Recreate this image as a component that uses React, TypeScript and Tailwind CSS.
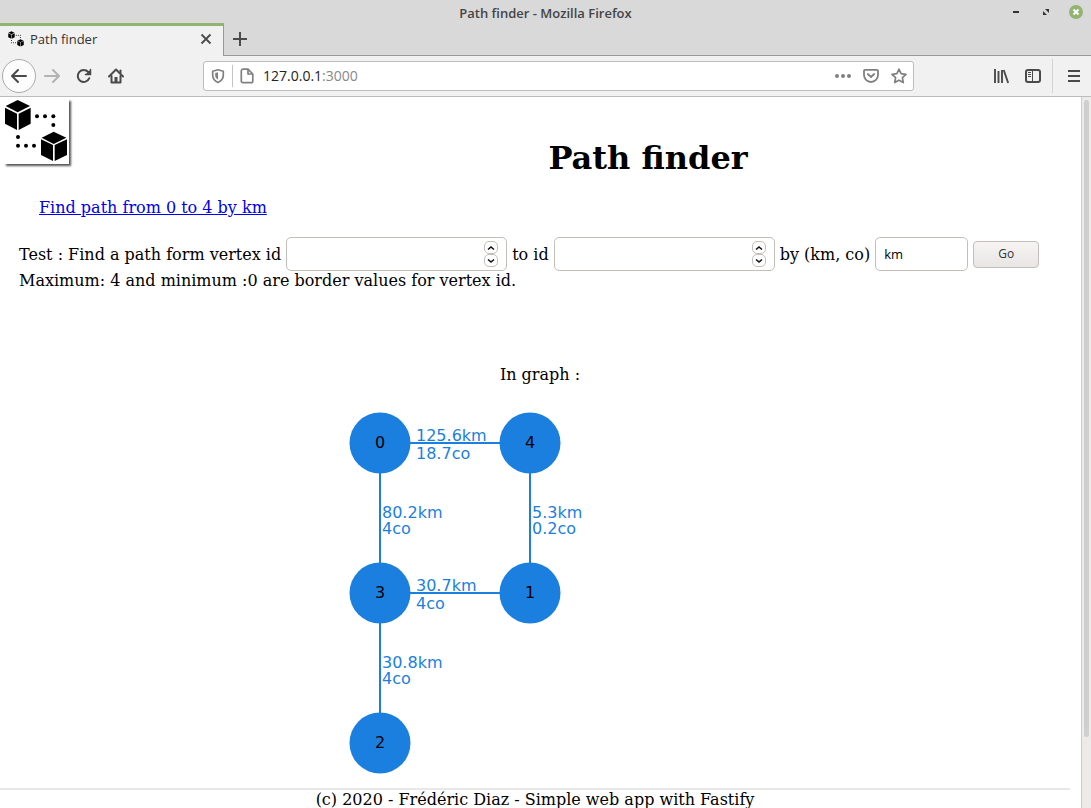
import { useState } from "react";

type Vertex = { id: number; x: number; y: number };
type Edge = { from: number; to: number; km: string; co: string };

const vertices: Vertex[] = [
  { id: 0, x: 40, y: 40 },
  { id: 4, x: 190, y: 40 },
  { id: 3, x: 40, y: 190 },
  { id: 1, x: 190, y: 190 },
  { id: 2, x: 40, y: 340 },
];

const edges: Edge[] = [
  { from: 0, to: 4, km: "125.6km", co: "18.7co" },
  { from: 0, to: 3, km: "80.2km", co: "4co" },
  { from: 4, to: 1, km: "5.3km", co: "0.2co" },
  { from: 3, to: 1, km: "30.7km", co: "4co" },
  { from: 3, to: 2, km: "30.8km", co: "4co" },
];

function CubesLogo({ className }: { className: string }) {
  return (
    <svg className={className} viewBox="12 27 192 192" aria-hidden="true">
      <g fill="#000">
        <path d="M53 30 90 48 53 67 17 48Z" />
        <path d="M15 53 51 71V120L15 101Z" />
        <path d="M92 53 56 71V120L92 101Z" />
        <path d="M161 125 199 143 161 162 125 143Z" />
        <path d="M123 148 159 165V213L123 195Z" />
        <path d="M201 148 164 165V213L201 195Z" />
        <circle cx="111" cy="79" r="6" />
        <circle cx="135" cy="79" r="6" />
        <circle cx="160" cy="79" r="6" />
        <circle cx="160" cy="105" r="6" />
        <circle cx="54" cy="141" r="6" />
        <circle cx="54" cy="167" r="6" />
        <circle cx="78" cy="167" r="6" />
        <circle cx="102" cy="167" r="6" />
      </g>
    </svg>
  );
}

function TitleBar() {
  return (
    <div className="grid h-[23px] shrink-0 grid-cols-3 items-center bg-[#d9d9d9]">
      <span className="col-start-2 pt-0.5 text-center text-[13px] leading-4 font-semibold whitespace-nowrap text-[#454545]">
        Path finder - Mozilla Firefox
      </span>
      <div className="flex items-center justify-end gap-4 pr-2">
        <button aria-label="Minimize" className="flex size-3.5 items-center justify-center">
          <svg className="size-3.5" viewBox="0 0 14 14">
            <path d="M4 7h6" stroke="#333" strokeWidth="2" />
          </svg>
        </button>
        <button aria-label="Restore" className="flex size-3.5 items-center justify-center">
          <svg className="size-3.5" viewBox="0 0 14 14">
            <path d="M6 4h4v4zM4 6v4h4z" fill="#333" />
          </svg>
        </button>
        <button aria-label="Close window" className="flex size-3.5 items-center justify-center">
          <svg className="size-3.5" viewBox="0 0 14 14">
            <circle cx="7" cy="7" r="7" fill="#92b372" />
            <path d="m4.500 4.500 5 5m0-5-5 5" stroke="#fff" strokeWidth="2" />
          </svg>
        </button>
      </div>
    </div>
  );
}

function TabStrip() {
  return (
    <div className="flex h-[33px] shrink-0 bg-[#d9d9d9]">
      <div className="flex w-56 items-center border-t-3 border-r border-t-[#92b372] border-r-[#999] bg-[#f1f1f1] pr-[9px] pb-1 pl-2">
        <CubesLogo className="size-4" />
        <span className="ml-1.5 flex-1 text-[13px] leading-5 text-[#333]">Path finder</span>
        <button aria-label="Close tab">
          <svg className="size-4" viewBox="0 0 16 16" fill="none" stroke="#4a4a4a" strokeWidth="1.8">
            <path d="m3.500 3.500 9 9m0-9-9 9" />
          </svg>
        </button>
      </div>
      <div className="flex flex-1 items-center border-b border-[#999] pl-2">
        <button aria-label="New tab">
          <svg className="size-4" viewBox="0 0 16 16" fill="none" stroke="#4a4a4a" strokeWidth="2">
            <path d="M8 1v14M1 8h14" />
          </svg>
        </button>
      </div>
    </div>
  );
}

function NavBar() {
  return (
    <div className="flex h-[41px] shrink-0 items-center border-b border-[#bcbcbc] bg-[#f1f1f1] px-0.5 text-[#4a4a4a]">
      <button
        aria-label="Back"
        className="flex size-[34px] items-center justify-center rounded-full border border-[#aaa] bg-[#fdfdfd]"
      >
        <svg className="size-4" viewBox="0 0 16 16" fill="none" stroke="currentColor" strokeWidth="2" strokeLinecap="round" strokeLinejoin="round">
          <path d="M15 8H1.500M7 2 1 8l6 6" />
        </svg>
      </button>
      <button aria-label="Forward" className="ml-2 text-[#b2b2b2]">
        <svg className="size-4" viewBox="0 0 16 16" fill="none" stroke="currentColor" strokeWidth="2" strokeLinecap="round" strokeLinejoin="round">
          <path d="M1 8h13.500M9 2l6 6-6 6" />
        </svg>
      </button>
      <button aria-label="Reload" className="ml-4">
        <svg className="size-4" viewBox="0 0 16 16" fill="none" stroke="currentColor" strokeWidth="2" strokeLinecap="round">
          <path d="M13.300 10.200A6 6 0 1 1 12.300 4" />
          <path d="M15 1v6H9z" fill="currentColor" stroke="none" />
          <path d="M14.500 1.500v5H9.500" strokeWidth="1.500" />
        </svg>
      </button>
      <button aria-label="Home" className="ml-4">
        <svg className="size-4" viewBox="0 0 16 16" fill="none" stroke="currentColor" strokeWidth="2" strokeLinecap="round" strokeLinejoin="round">
          <path d="M1 8.500 8 1.500l7 7" />
          <path d="M3.500 8v6.500h9V8" />
          <path d="M6.500 15V9h3v6z" fill="currentColor" stroke="none" />
          <path d="M12.500 5V2.500" />
        </svg>
      </button>

      <div className="ml-[79px] flex h-[30px] min-w-0 flex-1 items-center rounded-[3px] border border-[#bcbcbc] bg-white pr-1.5 pl-1.5 text-[#808080]">
        <button aria-label="Tracking protection">
          <svg className="size-4" viewBox="0 0 16 16" fill="none" stroke="currentColor" strokeWidth="1.7" strokeLinejoin="round">
            <path d="M8 1.800 13.300 3.200V7c0 3.700-2.200 6-5.300 7.400C4.900 13 2.700 10.700 2.700 7V3.200z" />
            <path d="M8 4.200 5.200 5v2.300c0 2 .9 3.300 2.800 4.400z" fill="currentColor" stroke="none" />
          </svg>
        </button>
        <span className="ml-1.5 h-[22px] w-px bg-[#c4c4c4]" />
        <button aria-label="Site information" className="ml-1.5">
          <svg className="size-4" viewBox="0 0 16 16" fill="none" stroke="currentColor" strokeWidth="1.7" strokeLinejoin="round">
            <path d="M4 1.200h5l4.800 4.800v7a1.700 1.700 0 0 1-1.700 1.700H4A1.700 1.700 0 0 1 2.300 13V3A1.700 1.700 0 0 1 4 1.200z" />
            <path d="M9 1.500V6h4.500" />
          </svg>
        </button>
        <div
          role="textbox"
          aria-label="Address"
          tabIndex={0}
          className="ml-2 min-w-0 flex-1 text-[14px] leading-5 text-[#888]"
        >
          <span className="text-[#222]">127.0.0.1</span>:3000
        </div>
        <button aria-label="Page actions">
          <svg className="size-4" viewBox="0 0 16 16" fill="currentColor">
            <circle cx="2" cy="8" r="2" />
            <circle cx="8" cy="8" r="2" />
            <circle cx="14" cy="8" r="2" />
          </svg>
        </button>
        <button aria-label="Save to Pocket" className="ml-3">
          <svg className="size-4" viewBox="0 0 16 16" fill="none" stroke="currentColor" strokeWidth="1.8" strokeLinecap="round" strokeLinejoin="round">
            <path d="M2 1.800h12a1 1 0 0 1 1 1V7A7 7 0 0 1 1 7V2.800a1 1 0 0 1 1-1z" />
            <path d="m4.800 6 3.200 3 3.200-3" />
          </svg>
        </button>
        <button aria-label="Bookmark" className="ml-3">
          <svg className="size-4" viewBox="0 0 16 16" fill="none" stroke="currentColor" strokeWidth="1.7" strokeLinejoin="round">
            <path d="m8 1.200 2.100 4.500 4.900.6-3.600 3.400.9 4.900L8 12.200l-4.300 2.400.9-4.900L1 6.300l4.900-.6z" />
          </svg>
        </button>
      </div>

      <button aria-label="Library" className="ml-[79px]">
        <svg className="size-4" viewBox="0 0 16 16" fill="none" stroke="currentColor" strokeWidth="1.900">
          <path d="M2 1v14M5.500 3v12M9 2v13M10.700 2l4.500 13" />
        </svg>
      </button>
      <button aria-label="Sidebars" className="ml-4">
        <svg className="size-4" viewBox="0 0 16 16" fill="none" stroke="currentColor">
          <rect x="1" y="2" width="14" height="12" rx="2" strokeWidth="2" />
          <path d="M7.500 2v12" strokeWidth="1" />
          <path d="M3 4.500h3M3 6.500h3M3 8.500h3" strokeWidth="1" />
        </svg>
      </button>
      <span className="ml-[11px] h-[34px] w-px bg-[#d3d3d3]" />
      <button aria-label="Open menu" className="mr-[7px] ml-[13px]">
        <svg className="size-4" viewBox="0 0 16 16" stroke="currentColor" strokeWidth="2">
          <path d="M2 3h12M2 8h12M2 13h12" />
        </svg>
      </button>
    </div>
  );
}

function StepButton({ up, label, onClick }: { up?: boolean; label: string; onClick: () => void }) {
  return (
    <button
      type="button"
      aria-label={label}
      onClick={onClick}
      className="flex h-[13px] w-3.5 items-center justify-center rounded-[5px] border border-[#c3beb9] bg-white"
    >
      <svg className="size-2" viewBox="0 0 8 8" fill="none" stroke="#111" strokeWidth="1.600">
        {up ? <path d="M1 5.500 4 3l3 2.500" /> : <path d="M1 2.500 4 5l3-2.500" />}
      </svg>
    </button>
  );
}

function VertexField({ label, id }: { label: string; id: string }) {
  const [value, setValue] = useState("");
  const step = (delta: number) =>
    setValue(String(Math.min(4, Math.max(0, Number(value) + delta))));
  return (
    <>
      <label htmlFor={id}>{label}</label>
      <span className="relative flex">
        <input
          id={id}
          type="number"
          min={0}
          max={4}
          value={value}
          onChange={(e) => setValue(e.target.value)}
          className="h-[34px] w-[221px] [appearance:textfield] rounded-[5px] border border-[#c3beb9] bg-white pr-7 pl-2 font-['Open_Sans',sans-serif] text-[13px] [&::-webkit-inner-spin-button]:appearance-none"
        />
        <span className="absolute inset-y-0 right-[9px] flex flex-col justify-center">
          <StepButton up label="Increase" onClick={() => step(1)} />
          <StepButton label="Decrease" onClick={() => step(-1)} />
        </span>
      </span>
    </>
  );
}

function Graph() {
  const find = (id: number) => vertices.find((v) => v.id === id)!;
  return (
    <svg
      className="mx-auto h-[380px] w-[400px] font-['DejaVu_Sans',sans-serif] text-[16px]"
      viewBox="0 0 400 380"
      role="img"
      aria-label="Graph"
    >
      {edges.map((edge) => {
        const a = find(edge.from);
        const b = find(edge.to);
        const horizontal = a.y === b.y;
        const x = horizontal ? a.x + 36 : a.x + 2;
        const y = horizontal ? a.y - 2 : a.y + 75;
        return (
          <g key={`${edge.from}-${edge.to}`} fill="#1b7fe0">
            <line x1={a.x} y1={a.y} x2={b.x} y2={b.y} stroke="#1b7fe0" strokeWidth="2" />
            <text x={x} y={y}>{edge.km}</text>
            <text x={x} y={y + (horizontal ? 18 : 16)}>{edge.co}</text>
          </g>
        );
      })}
      {vertices.map((v) => (
        <g key={v.id}>
          <circle cx={v.x} cy={v.y} r="30.500" fill="#1b7fe0" />
          <text x={v.x} y={v.y + 5} textAnchor="middle" fill="#000">{v.id}</text>
        </g>
      ))}
    </svg>
  );
}

function Page() {
  return (
    <main className="min-w-0 flex-1 overflow-hidden bg-white pr-px font-['DejaVu_Serif',serif] text-[16px] leading-[19px] text-black">
      <header className="grid grid-cols-[1fr_4fr] pt-0.5">
        <div className="pl-1">
          <div className="size-[65px] bg-white shadow-[2px_2px_2px_#555]">
            <CubesLogo className="size-16" />
          </div>
        </div>
        <h1 className="pt-10 text-center text-[32px] leading-[38px] font-bold">Path finder</h1>
      </header>
      <nav className="mt-[21px] pl-[39px]">
        <a href="/path/0/4/km" className="text-[#0000ee] underline">
          Find path from 0 to 4 by km
        </a>
      </nav>
      <form className="mt-5 flex flex-wrap items-center gap-x-[5px] pl-[19px]" onSubmit={(e) => e.preventDefault()}>
        <VertexField label="Test : Find a path form vertex id" id="from" />
        <VertexField label="to id" id="to" />
        <label htmlFor="unit">by (km, co)</label>
        <input
          id="unit"
          type="text"
          defaultValue="km"
          className="h-[34px] w-[93px] rounded-[5px] border border-[#c3beb9] bg-white px-2 font-['Open_Sans',sans-serif] text-[13px]"
        />
        <button
          type="submit"
          className="h-[27px] w-[66px] rounded-[4px] border border-[#c3beb9] bg-linear-to-b from-[#f6f5f4] to-[#e8e6e4] font-['Open_Sans',sans-serif] text-[12px] leading-4 text-[#333]"
        >
          Go
        </button>
      </form>
      <p className="pl-[19px]">Maximum: 4 and minimum :0 are border values for vertex id.</p>
      <p className="mt-[75px] mb-[19px] text-center">In graph :</p>
      <Graph />
      <footer className="mt-[5px] mr-2.5 border-t-2 border-[#e8e8e8] text-center">
        (c) 2020 - Frédéric Diaz - Simple web app with Fastify
      </footer>
    </main>
  );
}

export default function App() {
  return (
    <div className="flex h-screen flex-col overflow-hidden font-['Open_Sans',sans-serif]">
      <TitleBar />
      <TabStrip />
      <NavBar />
      <div className="flex min-h-0 flex-1">
        <Page />
        <div className="w-2.5 border-l border-[#d0ccc9] bg-[#ecebea] px-0.5 pt-[3px]">
          <div className="h-[90%] rounded-full bg-[#cfcfcf]" />
        </div>
      </div>
    </div>
  );
}
